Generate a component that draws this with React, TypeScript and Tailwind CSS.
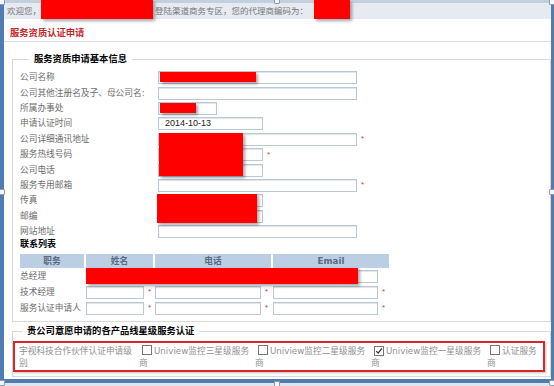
import React from "react";

const font = "font-['DejaVu_Sans','Noto_Sans_CJK_SC',sans-serif]";

type Row = { label: string; w?: number; star?: boolean; value?: string };

const rows: Row[] = [
  { label: "公司名称", w: 199 },
  { label: "公司其他注册名及子、母公司名:", w: 199 },
  { label: "所属办事处", w: 59 },
  { label: "申请认证时间", w: 105, value: "2014-10-13" },
  { label: "公司详细通讯地址", w: 199, star: true },
  { label: "服务热线号码", w: 105, star: true },
  { label: "公司电话", w: 105 },
  { label: "服务专用邮箱", w: 199, star: true },
  { label: "传真", w: 105 },
  { label: "邮编", w: 105 },
  { label: "网站地址", w: 199 },
];

function Field({ w, value }: { w: number; value?: string }) {
  return (
    <div
      className="h-[13px] border border-[#bcc7d4] bg-white shadow-[inset_0_1px_1px_#dfe5ec] flex items-center pl-[6px] text-[9px] font-['Liberation_Sans',sans-serif] text-[#222]"
      style={{ width: w }}
    >
      {value}
    </div>
  );
}

function Star() {
  return <span className="ml-[4px] text-[8px] leading-none text-[#e0304a] font-['Liberation_Sans',sans-serif]">*</span>;
}

function Box({ checked }: { checked?: boolean }) {
  return (
    <span className="inline-flex align-[-1px] w-[10px] h-[10px] border border-[#777] bg-white mr-[2px] items-center justify-center">
      {checked && (
        <svg viewBox="0 0 10 10" className="w-[8px] h-[8px]">
          <path d="M1.5 5.2 L4 7.6 L8.6 1.8" fill="none" stroke="#333" strokeWidth="1.6" />
        </svg>
      )}
    </span>
  );
}

function Redact({ l, t, w, h }: { l: number; t: number; w: number; h: number }) {
  return (
    <div
      className="absolute bg-[#ff0000] shadow-[2px_2px_3px_rgba(0,0,0,0.35)]"
      style={{ left: l, top: t, width: w, height: h }}
    />
  );
}

function Handle({ l, t }: { l: number; t: number }) {
  return (
    <div
      className="absolute w-[6px] h-[6px] border border-[#8a9bb0] bg-[#f4f6f9] rounded-[1px]"
      style={{ left: l, top: t }}
    />
  );
}

export default function App() {
  return (
    <div className={`relative w-[554px] h-[386px] overflow-hidden bg-[#dfe5ec] ${font}`}>
      <div className="h-[383px] border-l-[4px] border-r-[3px] border-b-[4px] border-t-[3px] border-[#4f7db3] border-t-[#c3cfdc] bg-white flex flex-col">
        <div className="h-[16px] shrink-0 bg-[#e6ebf2] pl-[3px] flex items-center text-[8.5px] text-[#777]">
          <span>欢迎您，</span>
          <span className="ml-[114px]">登陆渠道商务专区，您的代理商编码为：</span>
        </div>

        <div className="h-[23px] shrink-0 border-b border-[#dcdcdc] pl-[6px] pt-[8px] text-[9.3px] leading-[12px] font-bold text-[#c0282d]">
          服务资质认证申请
        </div>

        <fieldset className="mt-[11px] ml-[8px] border border-[#d8d8d8] pl-[7px] pr-0 pt-[5px] pb-[5px]">
          <legend className="ml-[9px] px-[5px] text-[9.3px] leading-[12px] font-bold text-black">
            服务资质申请基本信息
          </legend>
          {rows.map((r) => (
            <div key={r.label} className="h-[15.4px] flex items-center text-[8.7px] text-[#6b6b6b]">
              <div className="w-[138px] shrink-0 whitespace-nowrap">{r.label}</div>
              <Field w={r.w ?? 105} value={r.value} />
              {r.star && <Star />}
            </div>
          ))}
          <div className="h-[15px] text-[9px] leading-[11px] font-bold text-black">联系列表</div>

          <div className="grid grid-cols-[66px_69px_118px_116px] text-[8.7px]">
            {["职务", "姓名", "电话", "Email"].map((h, i) => (
              <div
                key={h}
                className={`h-[14px] bg-[#bccee3] flex items-center justify-center font-bold text-[#5a6a80] ${i < 3 ? "mr-[2px]" : ""}`}
              >
                {h}
              </div>
            ))}
            {["总经理", "技术经理", "服务认证申请人"].map((p, i) => (
              <React.Fragment key={p}>
                <div className="h-[16px] flex items-center text-[#6b6b6b] whitespace-nowrap">{p}</div>
                <div className="h-[16px] flex items-center">
                  <Field w={58} />
                  {i > 0 && <Star />}
                </div>
                <div className="h-[16px] flex items-center">
                  <Field w={106} />
                  {i > 0 && <Star />}
                </div>
                <div className="h-[16px] flex items-center">
                  <Field w={105} />
                  {i > 0 && <Star />}
                </div>
              </React.Fragment>
            ))}
          </div>
        </fieldset>

        <fieldset className="mt-[3px] ml-[8px] border border-[#d8d8d8] px-0 pt-[4px] pb-[4px]">
          <legend className="ml-[9px] px-[5px] text-[9.3px] leading-[12px] font-bold text-black">
            贵公司意愿申请的各产品线星级服务认证
          </legend>
          <div className="mr-[5px] border-2 border-[#d92626] shadow-[1px_1px_2px_rgba(0,0,0,0.25)] pt-[2px] pb-[1px] flex text-[8.7px] leading-[12px] text-[#8f8f8f]">
            <div className="w-[124px] shrink-0 pl-[4px] pr-[4px]">宇视科技合作伙伴认证申请级别</div>
            <div className="w-[116px] shrink-0">
              <span className="ml-[3px]" />
              <Box />Uniview监控三星级服务商
            </div>
            <div className="w-[116px] shrink-0">
              <span className="ml-[3px]" />
              <Box />Uniview监控二星级服务商
            </div>
            <div className="w-[116px] shrink-0">
              <span className="ml-[3px]" />
              <Box checked />Uniview监控一星级服务商
            </div>
            <div className="flex-1">
              <span className="ml-[3px]" />
              <Box />认证服务商
            </div>
          </div>
        </fieldset>
      </div>

      <Redact l={41} t={0} w={112} h={19} />
      <Redact l={314} t={0} w={36} h={19} />
      <Redact l={160} t={72} w={96} h={10} />
      <Redact l={160} t={103} w={36} h={10} />
      <Redact l={159} t={133} w={84} h={43} />
      <Redact l={157} t={194} w={100} h={29} />
      <Redact l={86} t={268} w={272} h={16} />

      <Handle l={-1} t={-1} />
      <Handle l={274} t={-2} />
      <Handle l={549} t={-1} />
      <Handle l={-1} t={189} />
      <Handle l={549} t={189} />
      <Handle l={-1} t={380} />
      <Handle l={274} t={381} />
      <Handle l={549} t={380} />
    </div>
  );
}
